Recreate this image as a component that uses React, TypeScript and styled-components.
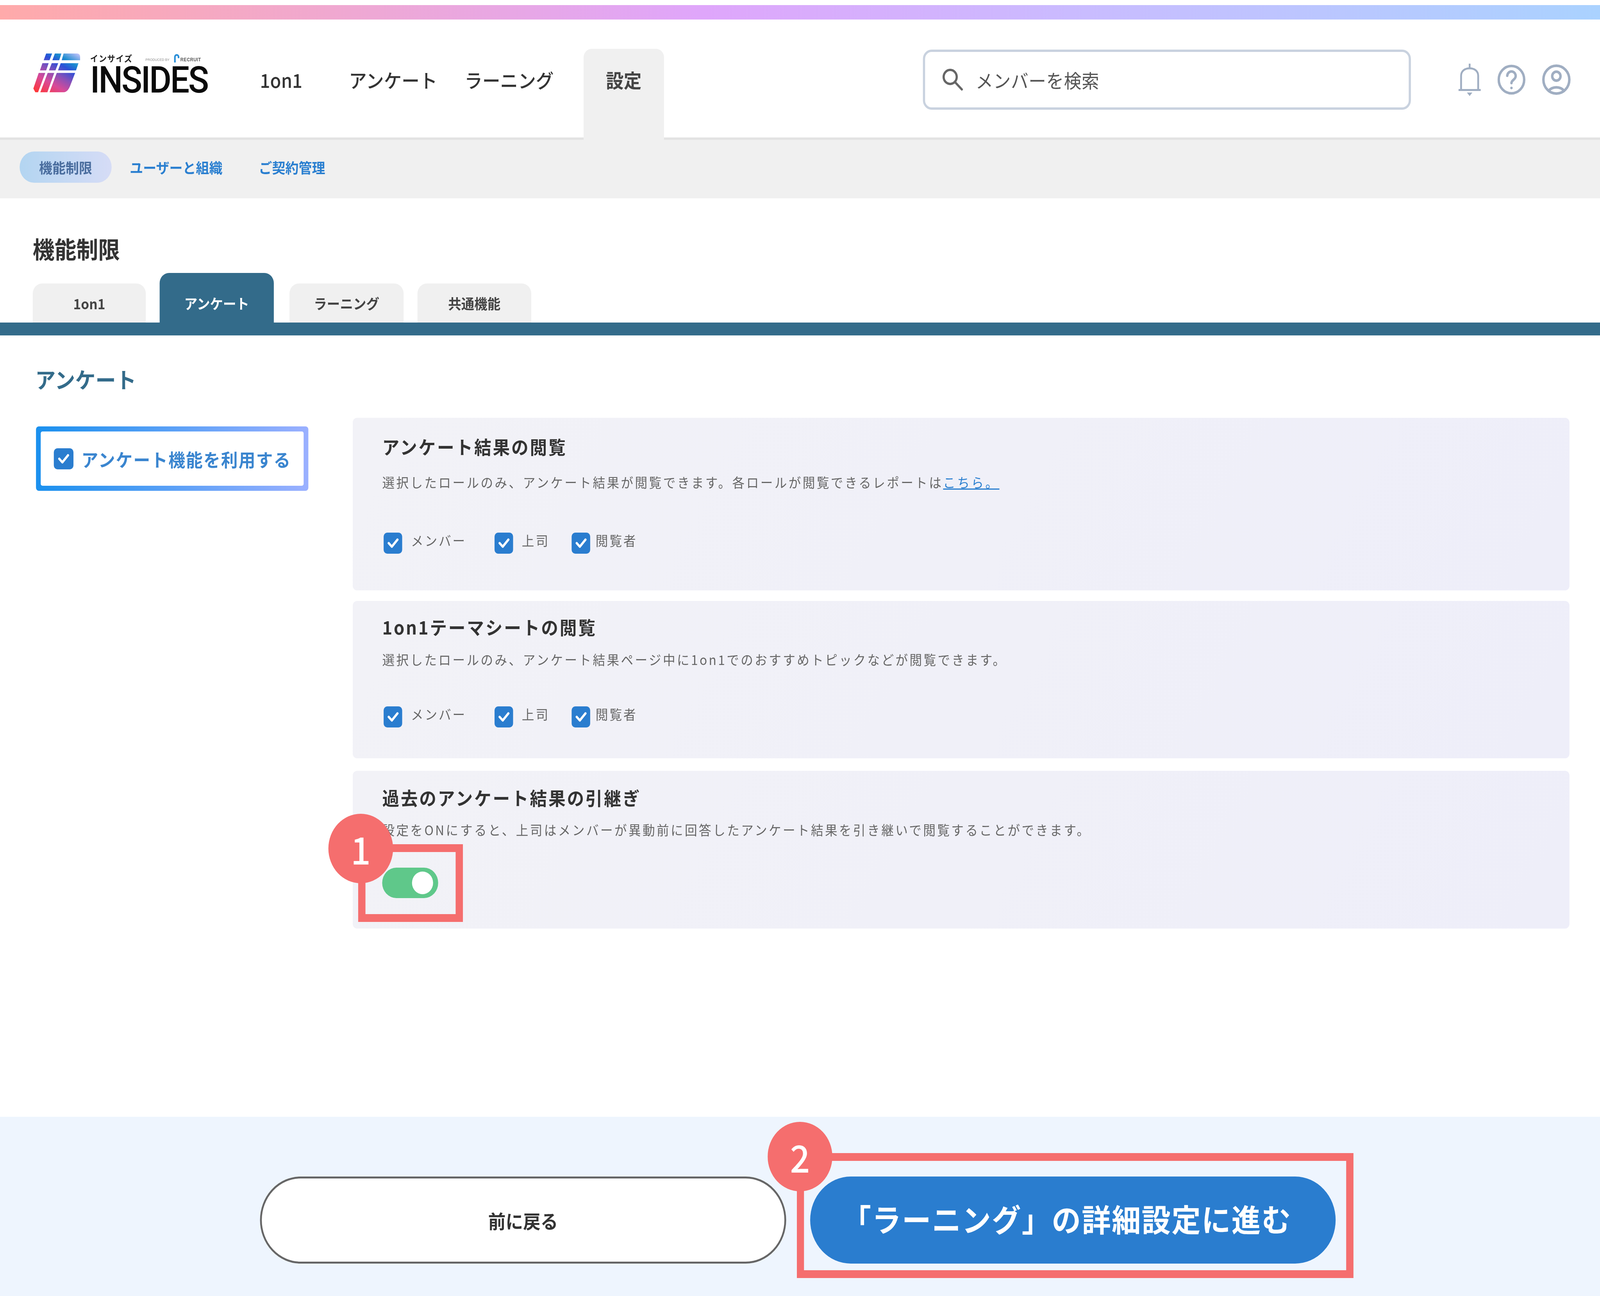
import React from "react";
import styled, { createGlobalStyle } from "styled-components";

const Global = createGlobalStyle`
  html, body { margin: 0; padding: 0; background: #fff; overflow-x: hidden; }
  * { box-sizing: border-box; }
  body { font-family: "Noto Sans CJK JP", "Noto Sans", sans-serif; color: #333; }
`;

const DESIGN_WIDTH = 4400;

const Page = styled.div`
  width: ${DESIGN_WIDTH}px;
  height: 3319px;
  display: flex;
  flex-direction: column;
  overflow: hidden;
  padding-top: 13px;
  transform-origin: 0 0;
`;

const RainbowBar = styled.div`
  height: 37px;
  flex: none;
  background: linear-gradient(90deg, #ffaaaa 0%, #dfa6fb 44%, #c9bcff 68%, #aad2ff 100%);
`;

const Header = styled.header`
  height: 308px;
  flex: none;
  display: flex;
  align-items: center;
  padding: 6px 80px 0 91px;
  border-bottom: 6px solid #e3e3e3;
`;

const Logo = styled.div`
  width: 480px;
  align-self: flex-start;
  margin-top: 80px;
  display: flex;
  gap: 27px;
`;

const LogoText = styled.div`
  display: flex;
  flex-direction: column;
  width: 323px;
`;

const LogoTop = styled.div`
  display: flex;
  align-items: flex-end;
  height: 24px;
  white-space: nowrap;
`;

const LogoKana = styled.span`
  font-size: 22px;
  line-height: 24px;
  font-weight: 700;
  letter-spacing: 1.5px;
  color: #222;
  width: 152px;
`;

const LogoBy = styled.span`
  font-family: "Liberation Sans", sans-serif;
  font-size: 9px;
  line-height: 14px;
  color: #8a8a8a;
  width: 78px;
`;

const LogoRecruit = styled.span`
  font-family: "Liberation Sans", sans-serif;
  font-size: 12px;
  line-height: 14px;
  font-weight: 700;
  color: #555;
  letter-spacing: 0.5px;
  margin-left: 2px;
`;

const LogoName = styled.div`
  font-family: Roboto, sans-serif;
  font-size: 94px;
  font-weight: 500;
  line-height: 68px;
  letter-spacing: -3.6px;
  color: #0a0a0a;
  margin-top: 11px;
  white-space: nowrap;
`;

const Nav = styled.nav`
  align-self: stretch;
  display: flex;
  align-items: center;
  margin-left: 144px;
`;

const NavItem = styled.a<{ $after: number }>`
  font-size: 49px;
  line-height: 48px;
  font-weight: 500;
  color: #333;
  margin-right: ${(p) => p.$after}px;
  white-space: nowrap;
`;

const NavCurrent = styled.a`
  align-self: flex-end;
  width: 221px;
  height: 233px;
  margin-bottom: -6px;
  padding-top: 55px;
  background: #f0f0f0;
  border-radius: 22px 22px 0 0;
  font-size: 49px;
  line-height: 48px;
  font-weight: 700;
  color: #444;
  text-align: center;
`;

const SearchBox = styled.div`
  width: 1342px;
  height: 154px;
  margin-left: auto;
  display: flex;
  align-items: center;
  gap: 34px;
  padding-left: 47px;
  background: #fff;
  border: 6px solid #c9d2df;
  border-radius: 24px;
  font-size: 48px;
  letter-spacing: 0.6px;
  color: #555;
`;

const HeaderIcons = styled.div`
  display: flex;
  align-items: center;
  gap: 45px;
  margin-left: 130px;
`;

const SubNav = styled.div`
  height: 150px;
  flex: none;
  display: flex;
  align-items: flex-start;
  padding: 30px 0 0 54px;
  background: #f0f0f0;
`;

const SubItem = styled.a<{ $active?: boolean }>`
  height: 80px;
  display: flex;
  align-items: center;
  justify-content: center;
  font-size: 36.5px;
  font-weight: 700;
  white-space: nowrap;
  color: ${(p) => (p.$active ? "#4a6d9e" : "#2a7fd0")};
  padding: ${(p) => (p.$active ? "0" : "0 50px")};
  width: ${(p) => (p.$active ? "253px" : "auto")};
  border-radius: 40px;
  background: ${(p) => (p.$active ? "linear-gradient(90deg, #b3d5f1, #d6dcf6)" : "transparent")};
`;

const PageTitle = styled.h1`
  margin: 98px 0 0 90px;
  font-size: 60px;
  line-height: 60px;
  font-weight: 700;
  color: #333;
`;

const TabRow = styled.div`
  display: flex;
  align-items: flex-end;
  height: 127px;
  margin-top: 33px;
  padding-left: 90px;
  flex: none;
`;

const Tab = styled.a<{ $active?: boolean; $w: number; $after: number }>`
  width: ${(p) => p.$w}px;
  height: ${(p) => (p.$active ? 127 : 100)}px;
  padding-top: ${(p) => (p.$active ? 27 : 0)}px;
  margin-right: ${(p) => p.$after}px;
  display: flex;
  align-items: center;
  justify-content: center;
  border-radius: 26px 26px 0 0;
  background: ${(p) => (p.$active ? "#336b8a" : "#f0f0f0")};
  color: ${(p) => (p.$active ? "#fff" : "#444")};
  font-size: 36px;
  font-weight: 700;
`;

const TabBar = styled.div`
  height: 33px;
  flex: none;
  background: #336b8a;
`;

const SectionTitle = styled.h2`
  margin: 83px 0 0 97px;
  font-size: 56px;
  line-height: 56px;
  font-weight: 700;
  color: #336b8a;
`;

const Content = styled.div`
  display: flex;
  align-items: flex-start;
  gap: 122px;
  margin-top: 72px;
  padding: 0 84px 0 99px;
`;

const MainToggleFrame = styled.div`
  width: 749px;
  height: 165px;
  flex: none;
  margin-top: 22px;
  padding: 13px;
  border-radius: 8px;
  background: linear-gradient(90deg, #1a90ee, #9ab0ff);
`;

const MainToggleInner = styled.label`
  height: 100%;
  display: flex;
  align-items: center;
  gap: 22px;
  padding-left: 36px;
  border-radius: 5px;
  background: #fff;
  font-size: 46px;
  font-weight: 700;
  letter-spacing: 2.2px;
  color: #3a85cf;
  white-space: nowrap;
`;

const Panels = styled.div`
  flex: 1;
  display: flex;
  flex-direction: column;
`;

const Panel = styled.section<{ $h: number; $top: number; $after: number }>`
  height: ${(p) => p.$h}px;
  margin-bottom: ${(p) => p.$after}px;
  padding: ${(p) => p.$top}px 0 0 81px;
  border-radius: 12px;
  background: linear-gradient(120deg, #f2f2f7, #eeeef9);
`;

const PanelTitle = styled.h3`
  margin: 0;
  font-size: 47px;
  line-height: 50px;
  font-weight: 700;
  letter-spacing: 4px;
  color: #333;
  white-space: nowrap;
`;

const PanelText = styled.p<{ $gap: number }>`
  margin: ${(p) => p.$gap}px 0 0;
  font-size: 34px;
  line-height: 40px;
  letter-spacing: 4.7px;
  color: #666;
  white-space: nowrap;
`;

const Link = styled.a`
  color: #2a7fd0;
  text-decoration: underline;
`;

const Options = styled.div<{ $gap: number }>`
  display: flex;
  align-items: flex-start;
  margin: ${(p) => p.$gap}px 0 0 4px;
`;

const Option = styled.label<{ $w?: number; $gap: number }>`
  display: flex;
  align-items: flex-start;
  gap: ${(p) => p.$gap}px;
  width: ${(p) => (p.$w ? `${p.$w}px` : "auto")};
  font-size: 34px;
  line-height: 40px;
  letter-spacing: 4.2px;
  color: #666;
  white-space: nowrap;
`;

const CheckBox = styled.span<{ $w: number }>`
  width: ${(p) => p.$w}px;
  height: 54px;
  flex: none;
  display: flex;
  align-items: center;
  justify-content: center;
  border-radius: 10px;
  background: #2a7dcf;
`;

const AnchorWrap = styled.div`
  position: relative;
`;

const ToggleWrap = styled(AnchorWrap)<{ $gap: number }>`
  width: 154px;
  margin-top: ${(p) => p.$gap}px;
`;

const Toggle = styled.div`
  width: 154px;
  height: 78px;
  display: flex;
  align-items: center;
  justify-content: flex-end;
  padding-right: 14px;
  border-radius: 39px;
  background: #5fc88a;
`;

const Knob = styled.span`
  width: 58px;
  height: 58px;
  border-radius: 50%;
  background: #fff;
`;

const MarkerBox = styled.div<{ $l: number; $t: number; $w: number; $h: number }>`
  position: absolute;
  left: ${(p) => p.$l}px;
  top: ${(p) => p.$t}px;
  width: ${(p) => p.$w}px;
  height: ${(p) => p.$h}px;
  border: 20px solid #f56e6e;
`;

const MarkerDot = styled.div<{ $l: number; $t: number }>`
  position: absolute;
  left: ${(p) => p.$l}px;
  top: ${(p) => p.$t}px;
  width: 178px;
  height: 178px;
  display: flex;
  align-items: center;
  justify-content: center;
  border-radius: 50%;
  background: #f56e6e;
  color: #fff;
  font-size: 96px;
  font-weight: 500;
  line-height: 1;
`;

const Footer = styled.footer`
  margin-top: auto;
  height: 459px;
  flex: none;
  display: flex;
  align-items: flex-start;
  gap: 66px;
  padding: 153px 0 0 715px;
  background: #eef5fe;
`;

const BackButton = styled.button`
  width: 1447px;
  height: 223px;
  border: 5px solid #666;
  border-radius: 112px;
  background: #fff;
  color: #333;
  font-family: inherit;
  font-size: 48px;
  font-weight: 700;
`;

const PrimaryButton = styled.button`
  width: 1445px;
  height: 223px;
  padding: 0 34px 12px 0;
  border: 0;
  border-radius: 112px;
  background: #2a7dcf;
  color: #fff;
  font-family: inherit;
  font-size: 80px;
  font-weight: 700;
  letter-spacing: 2.4px;
`;

const Check = () => (
  <svg width="32" height="28" viewBox="0 0 32 28" fill="none">
    <path d="M4 14 L12.5 23 L28 5" stroke="#fff" strokeWidth="6" strokeLinecap="round" strokeLinejoin="round" />
  </svg>
);

const LogoMark = () => (
  <svg width="130" height="102" viewBox="90 108 380 296">
    <defs>
      <linearGradient id="logoGrad" gradientUnits="userSpaceOnUse" x1="100" y1="390" x2="303" y2="19">
        <stop offset="0" stopColor="#ff3636" />
        <stop offset="0.27" stopColor="#d84a98" />
        <stop offset="0.46" stopColor="#8a50b8" />
        <stop offset="0.65" stopColor="#2a50d8" />
        <stop offset="0.78" stopColor="#1a8ccf" />
        <stop offset="1" stopColor="#d2c8ff" />
      </linearGradient>
    </defs>
    <g fill="url(#logoGrad)">
      <path d="M195 110H243L222 160H175Z" />
      <path d="M265 110H318L300 160H245Z" />
      <path d="M335 110H445Q468 112 468 135V160H320Z" />
      <path d="M165 182H215L195 236H145Z" />
      <path d="M240 182H292L270 236H217Z" />
      <path d="M312 182H455L435 236H290Z" />
      <path d="M135 255H188L130 400H108L92 372Z" />
      <path d="M207 255H260L205 400H148Z" />
      <path d="M280 255H428L388 352Q368 400 335 400H222Z" />
    </g>
  </svg>
);

const RecruitArc = () => (
  <svg width="16" height="23" viewBox="0 0 16 23" fill="none">
    <path d="M3 23V9C3 2 13 2 13 9V12" stroke="#2a8fd8" strokeWidth="4.5" />
  </svg>
);

const SearchIcon = () => (
  <svg width="58" height="58" viewBox="0 0 58 58" fill="none" stroke="#666" strokeWidth="6" strokeLinecap="round">
    <circle cx="22" cy="22" r="18" />
    <path d="M35 35L54 54" />
  </svg>
);

const BellIcon = () => (
  <svg width="63" height="84" viewBox="0 0 63 84" fill="none" stroke="#a0aec2" strokeWidth="5">
    <path d="M31.5 1V13" />
    <path d="M8 67V32C8 20 18 13 31.5 13C45 13 55 20 55 32V67" />
    <path d="M1 68.5H62" />
    <path d="M24 75H39L31.5 84Z" fill="#a0aec2" stroke="none" />
  </svg>
);

const HelpIcon = () => (
  <svg width="77" height="82" viewBox="1 1 22 23" fill="none" stroke="#a0aec2" strokeWidth="1.9" strokeLinecap="round">
    <circle cx="12" cy="12.5" r="10" />
    <path d="M8.7 9.6a3.3 3.3 0 0 1 6.6 .4c0 2.4-3.3 2.8-3.3 5" />
    <path d="M12 18.6h.01" />
  </svg>
);

const UserIcon = () => (
  <svg width="80" height="82" viewBox="1 1 22 23" fill="none" stroke="#a0aec2" strokeWidth="1.9" strokeLinecap="round">
    <circle cx="12" cy="12.5" r="10" />
    <circle cx="12" cy="10" r="3.2" />
    <path d="M6 20.5C7.8 18.5 9.8 18 12 18S16.2 18.5 18 20.5" />
  </svg>
);

const roles = [
  { label: "メンバー", w: 305, gap: 24 },
  { label: "上司", w: 212, gap: 24 },
  { label: "閲覧者", gap: 15 },
];

const RoleOptions = ({ gap }: { gap: number }) => (
  <Options $gap={gap}>
    {roles.map((r) => (
      <Option key={r.label} $w={r.w} $gap={r.gap}>
        <CheckBox $w={51}>
          <Check />
        </CheckBox>
        {r.label}
      </Option>
    ))}
  </Options>
);

export default function App() {
  const fit = window.innerWidth / DESIGN_WIDTH;
  return (
    <Page style={{ transform: `scaleX(${fit})` }}>
      <Global />
      <RainbowBar />
      <Header>
        <Logo>
          <LogoMark />
          <LogoText>
            <LogoTop>
              <LogoKana>インサイズ</LogoKana>
              <LogoBy>PRODUCED BY</LogoBy>
              <RecruitArc />
              <LogoRecruit>RECRUIT</LogoRecruit>
            </LogoTop>
            <LogoName>INSIDES</LogoName>
          </LogoText>
        </Logo>
        <Nav>
          <NavItem $after={128}>1on1</NavItem>
          <NavItem $after={75}>アンケート</NavItem>
          <NavItem $after={82}>ラーニング</NavItem>
          <NavCurrent>設定</NavCurrent>
        </Nav>
        <SearchBox>
          <SearchIcon />
          メンバーを検索
        </SearchBox>
        <HeaderIcons>
          <BellIcon />
          <HelpIcon />
          <UserIcon />
        </HeaderIcons>
      </Header>
      <SubNav>
        <SubItem $active>機能制限</SubItem>
        <SubItem>ユーザーと組織</SubItem>
        <SubItem>ご契約管理</SubItem>
      </SubNav>
      <PageTitle>機能制限</PageTitle>
      <TabRow>
        <Tab $w={311} $after={38}>1on1</Tab>
        <Tab $w={314} $after={43} $active>アンケート</Tab>
        <Tab $w={314} $after={38}>ラーニング</Tab>
        <Tab $w={313} $after={0}>共通機能</Tab>
      </TabRow>
      <TabBar />
      <SectionTitle>アンケート</SectionTitle>
      <Content>
        <MainToggleFrame>
          <MainToggleInner>
            <CheckBox $w={54}>
              <Check />
            </CheckBox>
            アンケート機能を利用する
          </MainToggleInner>
        </MainToggleFrame>
        <Panels>
          <Panel $h={442} $top={48} $after={27}>
            <PanelTitle>アンケート結果の閲覧</PanelTitle>
            <PanelText $gap={47}>
              選択したロールのみ、アンケート結果が閲覧できます。各ロールが閲覧できるレポートは<Link>こちら。</Link>
            </PanelText>
            <RoleOptions gap={109} />
          </Panel>
          <Panel $h={403} $top={41} $after={32}>
            <PanelTitle>1on1テーマシートの閲覧</PanelTitle>
            <PanelText $gap={39}>
              選択したロールのみ、アンケート結果ページ中に1on1でのおすすめトピックなどが閲覧できます。
            </PanelText>
            <RoleOptions gap={100} />
          </Panel>
          <Panel $h={404} $top={43} $after={0}>
            <PanelTitle>過去のアンケート結果の引継ぎ</PanelTitle>
            <PanelText $gap={38}>
              設定をONにすると、上司はメンバーが異動前に回答したアンケート結果を引き継いで閲覧することができます。
            </PanelText>
            <ToggleWrap $gap={77}>
              <Toggle>
                <Knob />
              </Toggle>
              <MarkerBox $l={-66} $t={-60} $w={288} $h={199} />
              <MarkerDot $l={-148} $t={-138}>1</MarkerDot>
            </ToggleWrap>
          </Panel>
        </Panels>
      </Content>
      <Footer>
        <BackButton>前に戻る</BackButton>
        <AnchorWrap>
          <PrimaryButton>「ラーニング」の詳細設定に進む</PrimaryButton>
          <MarkerBox $l={-37} $t={-60} $w={1531} $h={320} />
          <MarkerDot $l={-117} $t={-140}>2</MarkerDot>
        </AnchorWrap>
      </Footer>
    </Page>
  );
}
